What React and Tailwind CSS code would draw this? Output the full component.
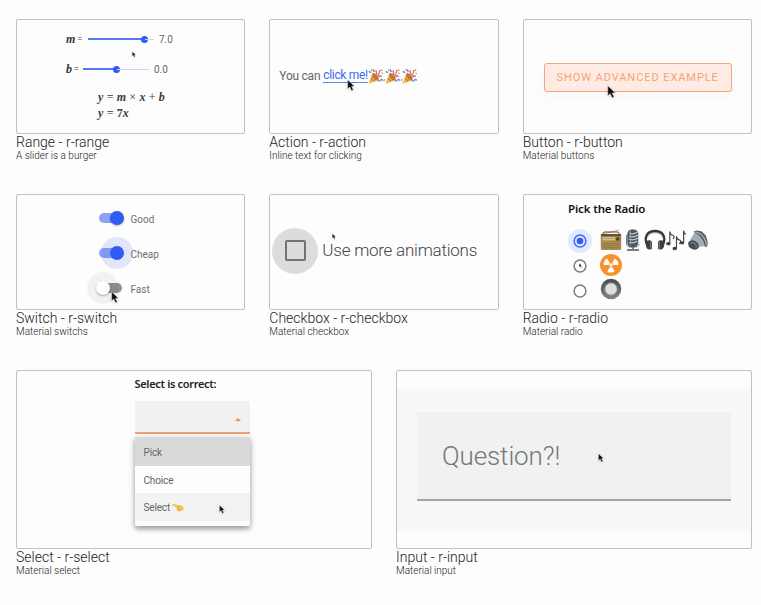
import React from "react";

function Cursor({ className }) {
  return (
    <svg viewBox="0 0 12 18" className={"absolute drop-shadow " + className}>
      <path d="M1 0.5V14L4.3 11.2L6.8 16.8L9.4 15.6L6.9 10.2H11.2Z" fill="#0b0b0b" stroke="#e8e8e8" strokeWidth="0.7" />
    </svg>
  );
}

function Card({ title, text, box, children }) {
  return (
    <section className="min-w-0">
      <div className={"relative overflow-hidden rounded-[2px] border border-[#c2c2c2] " + box}>{children}</div>
      <h3 className="h-[17px] whitespace-nowrap text-[14px] leading-[17px] font-light text-[#1c1c1c]">{title}</h3>
      <p className="h-[11px] whitespace-nowrap text-[10px] leading-[10px] font-light text-[#222]">{text}</p>
    </section>
  );
}

function Slider({ fill }) {
  return (
    <div className="flex w-[66px] items-center">
      <div className={"h-[2px] bg-[#5578f4] " + fill} />
      <div className="-mx-[3px] size-[7px] shrink-0 rounded-full bg-[#305cf3]" />
      <div className="h-px flex-1 bg-[#c7d3fb]" />
    </div>
  );
}

function Party() {
  return (
    <svg viewBox="0 0 16 16" className="h-[15px] w-[15.5px] shrink-0">
      <path d="M0.3 15.6L4.6 4Q9 6.5 11 12Z" fill="#f3b541" />
      <path d="M3 10L6 13M4 7L8.5 12" stroke="#b9792d" strokeWidth="1.2" />
      <ellipse cx="7.8" cy="8.1" rx="1.9" ry="4.6" transform="rotate(-38 7.8 8.1)" fill="#c4752d" />
      <path d="M7 8Q10 5 8 1.5M9 9Q11 6 14.5 8" fill="none" stroke="#d96668" strokeWidth="1.4" />
      <path d="M8 7Q12 6 12 2L15 1" fill="none" stroke="#e07a77" strokeWidth="1.4" />
      <path d="M0.5 2.5L3 4M10 12L13 13" stroke="#7a8fe0" strokeWidth="1.6" />
      <path d="M5 0.5L6.5 3M13 11L15.5 12" stroke="#5f86d2" strokeWidth="1.6" />
      <path d="M11 8L12 9M3 0.5L4 2M14 4L15.5 5" stroke="#e7a33c" strokeWidth="1.4" />
    </svg>
  );
}

function RadioSet() {
  return (
    <svg viewBox="0 0 22 22" className="w-[22px] shrink-0">
      <path d="M3 5L19 1" stroke="#b5a58c" strokeWidth="0.9" />
      <path d="M3 6V4Q3 3 5 3H17Q19 3 19 4V6" fill="none" stroke="#60492b" strokeWidth="1" />
      <rect x="0.8" y="5" width="20.4" height="16" rx="1.4" fill="#a58a4d" />
      <rect x="0.8" y="5" width="20.4" height="2.3" rx="1" fill="#6b5030" />
      <rect x="2.8" y="8.3" width="12" height="3" fill="#e6d8ae" />
      <path d="M3.3 9.8H14" stroke="#8b7142" strokeWidth="0.8" />
      <circle cx="17.8" cy="10" r="1.8" fill="#594021" />
      <path d="M2.5 14.5H19.5M2.5 16.5H19.5M2.5 18.5H19.5" stroke="#8a713c" strokeWidth="0.5" />
    </svg>
  );
}

function Mic() {
  return (
    <svg viewBox="0 0 22 22" className="w-[22px] shrink-0">
      <path d="M4.5 6V16Q6 18.5 11 18.5Q16 18.5 17.5 15" fill="none" stroke="#777c84" strokeWidth="1" />
      <rect x="5.3" y="0.5" width="11" height="17.5" rx="4.6" fill="#4e555e" />
      <path d="M7 4Q11 6 15.5 3M7 7Q11 9 16 6M7 10Q11 12 16 9M7 13Q11 15 15.5 12" fill="none" stroke="#bac8d3" strokeWidth="1.3" />
      <path d="M8.5 1.5V16" stroke="#9ba8b3" strokeWidth="0.7" />
      <path d="M11 18V20M5 21H17" stroke="#777c83" strokeWidth="1.8" />
    </svg>
  );
}

function Headphones() {
  return (
    <svg viewBox="0 0 22 22" className="w-[22px] shrink-0">
      <path d="M3 16C-1 6 5 2 11 2S23 6 19 16" fill="none" stroke="#34363a" strokeWidth="2.3" />
      <path d="M3 9Q5 3.7 11 3.7T19 9" fill="none" stroke="#777b82" strokeWidth="0.7" />
      <path d="M2 12Q7 10 8 13V20Q3 22 2 17Z" fill="#3b3d41" />
      <path d="M20 12Q15 10 14 13V20Q19 22 20 17Z" fill="#3b3d41" />
      <path d="M6.8 12.5V20M15.2 12.5V20" stroke="#858991" />
    </svg>
  );
}

function Notes() {
  return (
    <svg viewBox="0 0 22 22" className="w-[21px] shrink-0" fill="none" stroke="#3d3f42" strokeWidth="1.2">
      <path d="M4 14V2Q4 5 7 6T7.5 10M11 19V7Q11 10 14 11T14 15M18.5 13V1Q18.5 4 21 5" />
      <g fill="#3d3f42">
        <ellipse cx="2.5" cy="15" rx="1.8" ry="1.2" />
        <ellipse cx="9.2" cy="20" rx="1.8" ry="1.2" />
        <ellipse cx="16.8" cy="14" rx="1.8" ry="1.2" />
      </g>
    </svg>
  );
}

function Speaker() {
  return (
    <svg viewBox="0 0 22 22" className="w-[22px] shrink-0">
      <path d="M3 11L8 3L15 2L20 12L18 17L10 18Z" fill="#a3aab0" />
      <path d="M6.5 3Q8 0.5 13 2Q19 4 20.5 12Q21.5 18 18 18Q17 12 13.5 8T6.5 3Z" fill="#5a6067" />
      <path d="M8.5 3Q14 4 17 9T19 16" fill="none" stroke="#b1b9bf" strokeWidth="1.2" />
      <path d="M1.5 13Q4 10 8 12T12 18Q10 22 5 20T1.5 13Z" fill="#474c53" />
      <path d="M3.5 14.5Q6 12.5 8 14.5T9 18.5" fill="none" stroke="#9299a0" strokeWidth="0.9" />
    </svg>
  );
}

function Radioactive() {
  return (
    <svg viewBox="0 0 22 22" className="size-[22px]">
      <circle cx="11" cy="11" r="11" fill="#f9912b" />
      <circle cx="11" cy="11" r="1.7" fill="#fff" />
      <g fill="#fff">
        <path d="M8.7 11H3.5Q3.5 7 7 4.5L9.8 9Q8.8 9.8 8.7 11Z" />
        <path d="M8.7 11H3.5Q3.5 7 7 4.5L9.8 9Q8.8 9.8 8.7 11Z" transform="rotate(120 11 11)" />
        <path d="M8.7 11H3.5Q3.5 7 7 4.5L9.8 9Q8.8 9.8 8.7 11Z" transform="rotate(240 11 11)" />
      </g>
    </svg>
  );
}

function RadioButtonEmoji() {
  return (
    <svg viewBox="0 0 22 22" className="size-[22px]">
      <defs>
        <linearGradient id="rim" x2="0" y2="1">
          <stop stopColor="#4c4c4c" />
          <stop offset="1" stopColor="#858585" />
        </linearGradient>
      </defs>
      <circle cx="11" cy="11" r="10.3" fill="url(#rim)" />
      <circle cx="11" cy="11" r="6" fill="#dedede" stroke="#a9a9a9" />
    </svg>
  );
}

function Hand() {
  return (
    <svg viewBox="0 0 12 9" className="h-[9px] w-[12px]">
      <path d="M0.5 1.4Q1 0.5 3 1.2L6 2L9 2.4Q12 3 11.7 6Q11 8.7 7 8.2Q4.5 8 5 6.5Q3.5 5.5 5 4.2L1 3Q0 2.5 0.5 1.4Z" fill="#f5c152" />
      <path d="M5 5.8H8M5.5 7.2H8M5 4.2H8" stroke="#d99b38" strokeWidth="0.5" />
    </svg>
  );
}

function Switch({ label, on, halo }) {
  return (
    <div className="flex h-[35px] items-center">
      <div className={"flex h-[10px] w-[23px] items-center rounded-full " + (on ? "justify-end bg-[#8ba4f8]" : "justify-start bg-[#929292]")}>
        <div
          className={
            "size-[14px] shrink-0 rounded-full " +
            (on ? "-mr-[2px] bg-[#305cf3] " : "-ml-[3px] bg-white shadow-[0_1px_2px_#0005,0_0_0_9px_#0000000b] ") +
            (halo ? "shadow-[0_0_0_9px_#305cf322]" : on ? "shadow-[0_1px_2px_#0004]" : "")
          }
        />
      </div>
      <span className="ml-[9px] pt-[4px] text-[10px] leading-[12px] text-[#707070]">{label}</span>
    </div>
  );
}

function RadioDot({ on }) {
  return (
    <div className={"flex size-[24px] items-center justify-center rounded-full " + (on ? "bg-[#e2e8fe]" : "")}>
      <svg viewBox="0 0 14 14" className="size-[14px]">
        <circle cx="7" cy="7" r="5.9" fill="none" stroke={on ? "#426af3" : "#7c7c7c"} strokeWidth="1.5" />
        {on && <circle cx="7" cy="7" r="3.3" fill="#305cf3" />}
      </svg>
    </div>
  );
}

function Op({ children }) {
  return <span className="px-[3.3px] font-normal">{children}</span>;
}

export default function App() {
  return (
    <main className="h-[605px] w-[761px] overflow-hidden bg-[#fdfdfd] pt-[19px] pl-4 font-['Roboto',sans-serif]">
      <div className="grid w-[736px] grid-cols-3 gap-x-6">
        <Card title="Range - r-range" text="A slider is a burger" box="h-[115px]">
          <div className="pt-[9px] pl-[49px] text-[10px] text-[#666]">
            <div className="flex h-5 items-center">
              <span className="flex w-[22px] items-center gap-[2px] text-[#333]">
                <i className="font-['Liberation_Serif',serif] text-[12px] leading-[14px] font-bold">m</i>
                <span className="pt-[2px] text-[9px]">=</span>
              </span>
              <Slider fill="w-[56px]" />
              <span className="ml-[5px]">7.0</span>
            </div>
            <div className="mt-[10px] flex h-5 items-center">
              <span className="flex w-[17px] items-center gap-[2px] text-[#333]">
                <i className="font-['Liberation_Serif',serif] text-[12px] leading-[14px] font-bold">b</i>
                <span className="pt-[2px] text-[9px]">=</span>
              </span>
              <Slider fill="w-[33px]" />
              <span className="ml-[5px]">0.0</span>
            </div>
            <div className="mt-[10px] ml-[32px] font-['Liberation_Serif',serif] text-[12px] leading-[16px] font-bold whitespace-nowrap text-[#3a3a3a]">
              <div><i>y</i><Op>=</Op><i>m</i><Op>×</Op><i>x</i><Op>+</Op><i>b</i></div>
              <div><i>y</i><Op>=</Op>7<i>x</i></div>
            </div>
          </div>
          <Cursor className="top-[31px] left-[115px] h-[7px] w-[4px]" />
        </Card>

        <Card title="Action - r-action" text="Inline text for clicking" box="h-[115px]">
          <div className="flex h-full items-center pb-px pl-[9px] text-[12px] whitespace-nowrap text-[#666]">
            <span className="w-[44px] tracking-[-0.25px]">You can</span>
            <span className="w-[44.5px] border-b border-[#5c80f5] leading-[13px] tracking-[-0.34px] text-[#426af3]">click me!</span>
            <Party /><span className="w-[1.8px] pt-1 text-[9px]">,</span>
            <Party /><span className="w-[1.8px] pt-1 text-[9px]">,</span>
            <Party />
          </div>
          <Cursor className="top-[59px] left-[77px] h-[13px] w-[8px]" />
        </Card>

        <Card title="Button - r-button" text="Material buttons" box="h-[115px]">
          <div className="pt-[43px] pl-[20px]">
            <div className="flex h-[29px] w-[188px] items-center justify-center rounded-[3px] border border-[#f3a57e] bg-[#feebe3] pt-[2px] text-[11px] tracking-[0.93px] whitespace-nowrap text-[#f4a37a] shadow-[0_5px_6px_#f3a57e10]">
              SHOW ADVANCED EXAMPLE
            </div>
          </div>
          <Cursor className="top-[65px] left-[83px] h-[14px] w-[9px]" />
        </Card>
      </div>

      <div className="mt-[32px] grid w-[736px] grid-cols-3 gap-x-6">
        <Card title="Switch - r-switch" text="Material switchs" box="h-[116px]">
          <div className="pt-[5px] pl-[81.5px]">
            <Switch label="Good" on />
            <Switch label="Cheap" on halo />
            <Switch label="Fast" />
          </div>
          <Cursor className="top-[96px] left-[94px] h-[13px] w-[8px]" />
        </Card>

        <Card title="Checkbox - r-checkbox" text="Material checkbox" box="h-[116px]">
          <div className="flex h-full items-center pb-[3px] pl-[2px]">
            <div className="flex size-[46px] items-center justify-center rounded-full bg-[#dcdcdc]">
              <div className="size-[21px] rounded-[2px] border-2 border-[#727272]" />
            </div>
            <span className="ml-[4px] pt-px text-[17px] font-light tracking-[-0.23px] whitespace-nowrap text-[#444]">Use more animations</span>
          </div>
          <Cursor className="top-[38px] left-[62px] h-[7px] w-[4px]" />
        </Card>

        <Card title="Radio - r-radio" text="Material radio" box="h-[116px]">
          <div className="pt-[6px] pl-[44.4px]">
            <h4 className="font-['Noto_Sans',sans-serif] text-[11.5px] leading-[16px] font-semibold tracking-[-0.15px] whitespace-nowrap text-[#111]">Pick the Radio</h4>
            <div className="mt-[11px] flex h-[25px] items-center gap-[7.5px]">
              <RadioDot on />
              <div className="-mt-px flex"><RadioSet /><Mic /><Headphones /><Notes /><Speaker /></div>
            </div>
            <div className="flex h-[25px] items-center gap-[7.5px]"><RadioDot /><div className="-mt-[2px]"><Radioactive /></div></div>
            <div className="flex h-[25px] items-center gap-[7.5px]"><RadioDot /><div className="-mt-[3px]"><RadioButtonEmoji /></div></div>
          </div>
          <Cursor className="top-[68px] left-[55px] h-[5px] w-[3px]" />
        </Card>
      </div>

      <div className="mt-[32px] grid w-[736px] grid-cols-2 gap-x-6">
        <Card title="Select - r-select" text="Material select" box="h-[179px]">
          <div className="ml-[117.5px] w-[115px] pt-[5px] text-[10px] tracking-[-0.15px] text-[#666]">
            <h4 className="font-['Noto_Sans',sans-serif] text-[11px] leading-[16px] font-semibold tracking-[-0.32px] whitespace-nowrap text-[#222]">Select is correct:</h4>
            <div className="mt-[9px] flex h-[33px] items-center justify-end rounded-t-[2px] border-b-2 border-[#f1a078] bg-[#f1f1f1] pt-[6px] pr-[9px]">
              <div className="border-x-[3px] border-b-[3px] border-x-transparent border-b-[#ef8b60]" />
            </div>
            <div className="mt-[3px] h-[89px] rounded-[2px] bg-[#fdfdfd] shadow-[0_3px_5px_#0005,0_1px_9px_#0002]">
              <div className="flex h-[29px] items-center bg-[#dadada] pt-px pl-[9px]">Pick</div>
              <div className="flex h-[27px] items-center pt-px pl-[9px]">Choice</div>
              <div className="flex h-[28px] items-center gap-[2px] bg-[#f3f3f4] pl-[9px]">Select <Hand /></div>
            </div>
          </div>
          <Cursor className="top-[133px] left-[202px] h-[11px] w-[6px]" />
        </Card>

        <Card title="Input - r-input" text="Material input" box="h-[179px]">
          <div className="mt-[17px] h-[144px] bg-[#f8f8f9] pt-[24px] pl-[20px]">
            <div className="flex h-[89px] w-[314px] items-center border-b-2 border-[#a5a5a7] bg-[#f1f1f2] pt-px pl-[25px] text-[26px] font-light tracking-[-0.1px] text-[#777]">Question?!</div>
          </div>
          <Cursor className="top-[82px] left-[201px] h-[10px] w-[6px]" />
        </Card>
      </div>
    </main>
  );
}
